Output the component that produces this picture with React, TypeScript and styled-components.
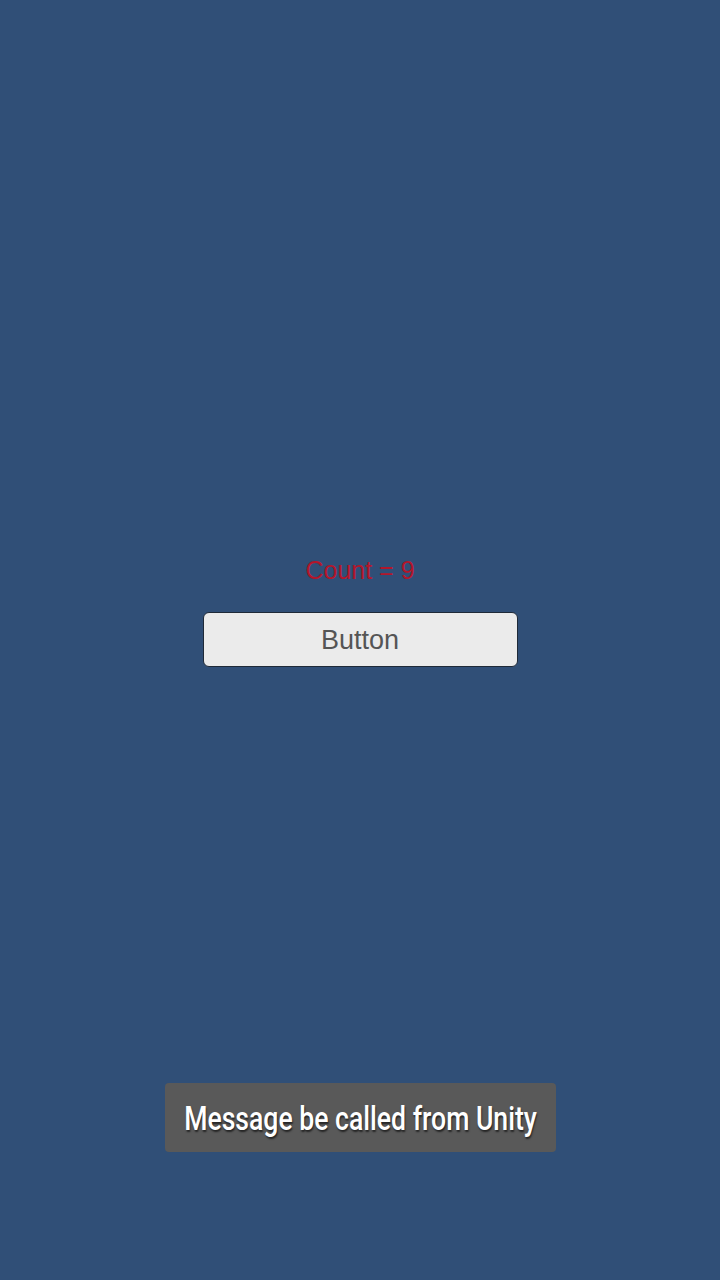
import { createGlobalStyle } from "styled-components";
import styled from "styled-components";

const GlobalStyle = createGlobalStyle`
  html, body {
    margin: 0;
    padding: 0;
    background: #304f77;
  }
`;

const Screen = styled.div`
  width: 720px;
  height: 1280px;
  display: flex;
  flex-direction: column;
  align-items: center;
  padding-top: 554px;
  box-sizing: border-box;
  background: #304f77;
`;

const CountLabel = styled.div`
  height: 30px;
  line-height: 32px;
  font-family: "Liberation Sans", Arial, sans-serif;
  font-size: 25px;
  color: #b3162b;
`;

const UnityButton = styled.button`
  display: block;
  margin-top: 28px;
  width: 315px;
  height: 55px;
  box-sizing: border-box;
  border: 1px solid #1f2a38;
  border-radius: 6px;
  background: #ebebeb;
  color: #555555;
  font-family: "Liberation Sans", Arial, sans-serif;
  font-size: 27px;
  padding: 0;
  padding-top: 2px;
`;

const Toast = styled.div`
  margin-top: 416px;
  width: 391px;
  height: 69px;
  box-sizing: border-box;
  display: flex;
  align-items: center;
  justify-content: center;
  background: #595959;
  border-radius: 4px;
`;

const ToastText = styled.span`
  display: inline-block;
  font-family: Roboto, "Noto Sans", sans-serif;
  font-size: 34px;
  font-weight: 500;
  color: #ffffff;
  text-shadow: 1px 2px 2px rgba(0, 0, 0, 0.6);
  white-space: nowrap;
  transform: scaleX(0.782);
`;

export default function App() {
  return (
    <>
      <GlobalStyle />
      <Screen>
        <CountLabel>Count = 9</CountLabel>
        <UnityButton>Button</UnityButton>
        <Toast>
          <ToastText>Message be called from Unity</ToastText>
        </Toast>
      </Screen>
    </>
  );
}
